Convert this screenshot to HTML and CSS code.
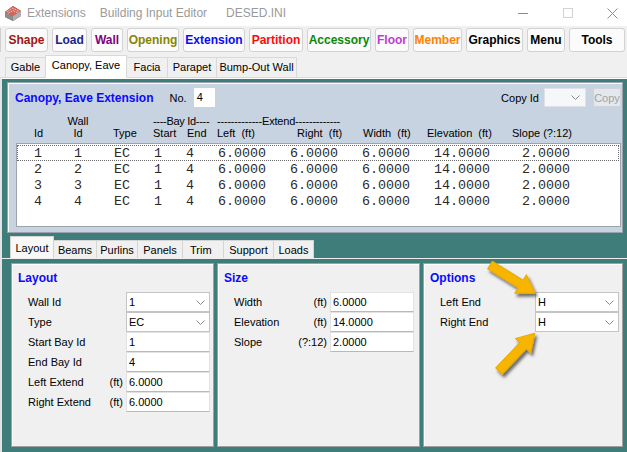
FILE: index.html
```html
<!DOCTYPE html>
<html>
<head>
<meta charset="utf-8">
<title>Extensions</title>
<link rel="stylesheet" href="styles.css">
</head>
<body>
<div class="window">
  <div class="titlebar">
    <svg class="appicon" viewBox="0 0 18 18">
      <polygon points="1,8 9,2 17,7 17,12 9,17 1,13" fill="#a8403a"/>
      <polygon points="1,8 9,2 17,7 9,12" fill="#d0685c"/>
      <polyline points="3,8 9,4 15,7.5" fill="none" stroke="#f3d6d0" stroke-width="0.8" stroke-dasharray="2 1"/>
      <polyline points="4,9.5 9,6.5 14,9" fill="none" stroke="#f3d6d0" stroke-width="0.8" stroke-dasharray="2 1"/>
      <polygon points="1,8 9,12 9,17 1,13" fill="#8d8d8d"/>
      <polygon points="9,12 17,7 17,12 9,17" fill="#b0b0b0"/>
    </svg>
    <span class="t1">Extensions</span>
    <span class="t2">Building Input Editor</span>
    <span class="t3">DESED.INI</span>
    <div class="caption">
      <span class="cb"><svg width="10" height="10" viewBox="0 0 10 10"><line x1="0" y1="5.5" x2="10" y2="5.5" stroke="#8c8c8c"/></svg></span>
      <span class="cb"><svg width="10" height="10" viewBox="0 0 10 10"><rect x="0.5" y="0.5" width="9" height="9" fill="none" stroke="#d2d2d2"/></svg></span>
      <span class="cb"><svg width="11" height="11" viewBox="0 0 11 11"><path d="M0.5 0.5 L10.5 10.5 M10.5 0.5 L0.5 10.5" stroke="#8c8c8c" fill="none"/></svg></span>
    </div>
  </div>

  <div class="toolbar">
    <span class="tb-edge"></span>
    <span class="tb c-shape">Shape</span>
    <span class="tb c-load">Load</span>
    <span class="tb c-wall">Wall</span>
    <span class="tb c-opening">Opening</span>
    <span class="tb c-extension">Extension</span>
    <span class="tb c-partition">Partition</span>
    <span class="tb c-accessory">Accessory</span>
    <span class="tb c-floor">Floor</span>
    <span class="tb c-member">Member</span>
    <span class="tb c-graphics">Graphics</span>
    <span class="tb c-menu">Menu</span>
    <span class="tb c-tools">Tools</span>
  </div>

  <div class="tabs1">
    <span class="tab w-gable">Gable</span>
    <span class="tab sel w-canopy">Canopy, Eave</span>
    <span class="tab w-facia">Facia</span>
    <span class="tab w-parapet">Parapet</span>
    <span class="tab w-bump">Bump-Out Wall</span>
  </div>

  <div class="body">
    <div class="panel">
      <div class="prow">
        <span class="ptitle">Canopy, Eave Extension</span>
        <span class="no">No.</span>
        <span class="numbox">4</span>
        <span class="copyid">Copy Id</span>
        <span class="smallcombo"><svg width="9" height="5" viewBox="0 0 9 5"><polyline points="0.5,0.5 4.5,4.5 8.5,0.5" fill="none" stroke="#8a8a8a"/></svg></span>
        <span class="copybtn">Copy</span>
      </div>
      <div class="hdr">
        <span class="h1 c2 ctr">Wall</span>
        <span class="h1 c4s">----Bay Id----</span>
        <span class="h1 c6s">-------------Extend-------------</span>
        <span class="h2 c1 pid">Id</span>
        <span class="h2 c2 ctr">Id</span>
        <span class="h2 c3 ptype">Type</span>
        <span class="h2 c4">Start</span>
        <span class="h2 c5">End</span>
        <span class="h2 c6">Left  (ft)</span>
        <span class="h2 c7">Right  (ft)</span>
        <span class="h2 c8">Width  (ft)</span>
        <span class="h2 c9">Elevation  (ft)</span>
        <span class="h2 c10">Slope (?:12)</span>
      </div>
      <div class="list">
        <div class="lrow focus">  1    1    EC   1   4   6.0000   6.0000   6.0000   14.0000    2.0000</div>
        <div class="lrow">  2    2    EC   1   4   6.0000   6.0000   6.0000   14.0000    2.0000</div>
        <div class="lrow">  3    3    EC   1   4   6.0000   6.0000   6.0000   14.0000    2.0000</div>
        <div class="lrow">  4    4    EC   1   4   6.0000   6.0000   6.0000   14.0000    2.0000</div>
      </div>
    </div>

    <div class="tabs2">
      <span class="tab2 sel w-layout">Layout</span>
      <span class="tab2 w-beams">Beams</span>
      <span class="tab2 w-purlins">Purlins</span>
      <span class="tab2 w-panels">Panels</span>
      <span class="tab2 w-trim">Trim</span>
      <span class="tab2 w-support">Support</span>
      <span class="tab2 w-loads">Loads</span>
    </div>

    <div class="page">
      <section class="grp">
        <div class="gtitle">Layout</div>
        <div class="frow">
          <span class="flabel">Wall Id</span>
          <span class="field combo"><span>1</span><svg width="9" height="5" viewBox="0 0 9 5"><polyline points="0.5,0.5 4.5,4.5 8.5,0.5" fill="none" stroke="#8a8a8a"/></svg></span>
        </div>
        <div class="frow">
          <span class="flabel">Type</span>
          <span class="field combo"><span>EC</span><svg width="9" height="5" viewBox="0 0 9 5"><polyline points="0.5,0.5 4.5,4.5 8.5,0.5" fill="none" stroke="#8a8a8a"/></svg></span>
        </div>
        <div class="frow">
          <span class="flabel">Start Bay Id</span>
          <span class="field">1</span>
        </div>
        <div class="frow">
          <span class="flabel">End Bay Id</span>
          <span class="field">4</span>
        </div>
        <div class="frow">
          <span class="flabel">Left Extend</span>
          <span class="unit">(ft)</span>
          <span class="field">6.0000</span>
        </div>
        <div class="frow">
          <span class="flabel">Right Extend</span>
          <span class="unit">(ft)</span>
          <span class="field">6.0000</span>
        </div>
      </section>

      <section class="grp grp-size">
        <div class="gtitle">Size</div>
        <div class="frow">
          <span class="flabel">Width</span>
          <span class="unit">(ft)</span>
          <span class="field">6.0000</span>
        </div>
        <div class="frow">
          <span class="flabel">Elevation</span>
          <span class="unit">(ft)</span>
          <span class="field">14.0000</span>
        </div>
        <div class="frow">
          <span class="flabel">Slope</span>
          <span class="unit">(?:12)</span>
          <span class="field">2.0000</span>
        </div>
      </section>

      <section class="grp">
        <div class="gtitle">Options</div>
        <div class="frow">
          <span class="flabel">Left End</span>
          <span class="field combo"><span>H</span><svg width="9" height="5" viewBox="0 0 9 5"><polyline points="0.5,0.5 4.5,4.5 8.5,0.5" fill="none" stroke="#8a8a8a"/></svg></span>
        </div>
        <div class="frow">
          <span class="flabel">Right End</span>
          <span class="field combo"><span>H</span><svg width="9" height="5" viewBox="0 0 9 5"><polyline points="0.5,0.5 4.5,4.5 8.5,0.5" fill="none" stroke="#8a8a8a"/></svg></span>
        </div>
      </section>
    </div>
  </div>

  <svg class="arrows" width="627" height="452" viewBox="0 0 627 452">
    <defs>
      <filter id="sh" x="-30%" y="-30%" width="160%" height="160%">
        <feDropShadow dx="2" dy="3" stdDeviation="1.6" flood-color="#000" flood-opacity="0.55"/>
      </filter>
    </defs>
    <g filter="url(#sh)" fill="#f7b500" stroke="#eaa800" stroke-width="1" stroke-linejoin="round">
      <polygon transform="translate(490,265) rotate(31.9)" points="0,-4.5 36,-4.5 36,-11 53,0 36,11 36,4.5 0,4.5"/>
      <polygon transform="translate(499,371) rotate(-46.5)" points="0,-4.5 35,-4.5 35,-10.5 52,0 35,10.5 35,4.5 0,4.5"/>
    </g>
  </svg>
</div>
</body>
</html>
```

FILE: styles.css
```css
* { box-sizing: border-box; margin: 0; padding: 0; }
html, body { width: 627px; height: 452px; overflow: hidden; background: #f0f0f0; }
body { font-family: "Liberation Sans", Arial, sans-serif; font-size: 11px; color: #000; }

.window { position: relative; width: 627px; height: 452px; display: flex; flex-direction: column; background: #f0f0f0; overflow: hidden; }

/* title bar */
.titlebar { height: 26px; flex: none; background: #fff; display: flex; align-items: center; padding-left: 4px; font-size: 12px; color: #9a9a9a; }
.appicon { width: 18px; height: 18px; flex: none; }
.t1 { margin-left: 5px; }
.t2 { margin-left: 14px; }
.t3 { margin-left: 19px; }
.caption { display: flex; margin-left: auto; margin-right: -8px; height: 26px; }
.cb { width: 45px; height: 26px; flex: none; display: flex; align-items: center; justify-content: center; }

/* toolbar */
.toolbar { height: 28px; flex: none; display: flex; align-items: center; gap: 4px; }
.tb-edge { width: 1px; height: 24px; border-right: 1px solid #cfcfcf; flex: none; }
.tb { height: 24px; flex: none; border: 1px solid #d2d2d2; border-radius: 3px; background: #fbfbfb; font-weight: bold; font-size: 12px; display: flex; align-items: center; justify-content: center; }
.c-shape { width: 43px; color: #a31515; }
.c-load { width: 35px; color: #1e1e8c; }
.c-wall { width: 32px; color: #800080; }
.c-opening { width: 52px; color: #868600; }
.c-extension { width: 62px; color: #0a0aff; }
.c-partition { width: 54px; color: #ff0a0a; }
.c-accessory { width: 64px; color: #0a880a; }
.c-floor { width: 34px; color: #c03cd0; }
.c-member { width: 49px; color: #ff8200; }
.c-graphics { width: 57px; color: #000; }
.c-menu { width: 38px; color: #000; }
.c-tools { width: 56px; color: #000; }

/* top tabs */
.tabs1 { height: 24px; flex: none; display: flex; align-items: flex-end; padding-left: 5px; border-bottom: 1px solid #d9d9d9; }
.tab { height: 20px; border: 1px solid #d9d9d9; border-bottom: none; margin-right: -1px; background: #f0f0f0; display: flex; align-items: center; justify-content: center; line-height: 13px; }
.tab.sel { height: 23px; margin-bottom: -1px; background: #fff; align-items: flex-start; padding-top: 3px; position: relative; z-index: 1; }
.w-gable { width: 41px; }
.w-canopy { width: 82px; }
.w-facia { width: 42px; }
.w-parapet { width: 50px; }
.w-bump { width: 81px; }

/* body */
.body { flex: 1; background: #3e7d7a; border-left: 2px solid #e4e4e4; border-top: 1px solid #fff; display: flex; flex-direction: column; }

.panel { margin: 3px 4px 0 5px; height: 151px; flex: none; background: #c7d3e0; border: 1px solid #9aa3ad; box-shadow: inset 1px 1px 0 #fff; padding: 5px 1px 5px 7px; display: flex; flex-direction: column; }
.prow { height: 19px; display: flex; align-items: center; }
.ptitle { font-weight: bold; font-size: 12px; color: #0a0aff; }
.no { margin-left: 16px; }
.numbox { margin-left: 7px; width: 21px; height: 19px; background: #fff; padding-left: 3px; line-height: 19px; }
.copyid { margin-left: auto; }
.smallcombo { margin-left: 5px; width: 42px; height: 19px; background: #f6f7f9; border: 1px solid #dde2e8; display: flex; align-items: center; justify-content: flex-end; padding-right: 5px; }
.copybtn { margin-left: 7px; width: 28px; height: 19px; background: #e4e8ec; border: 1px solid #cfd4da; border-radius: 2px; color: #a3a3a3; display: flex; align-items: center; justify-content: center; }

.hdr { margin-top: 8px; display: grid; grid-template-columns: 43px 40px 55px 34px 30px 80px 66px 64px 85px 1fr; grid-template-rows: 12px 12px; line-height: 12px; white-space: pre; }
.h1 { grid-row: 1; }
.h2 { grid-row: 2; }
.c1 { grid-column: 1; }
.c2 { grid-column: 2; }
.c3 { grid-column: 3; }
.c4 { grid-column: 4; }
.c5 { grid-column: 5; }
.c6 { grid-column: 6; }
.c7 { grid-column: 7; }
.c8 { grid-column: 8; }
.c9 { grid-column: 9; }
.c10 { grid-column: 10; }
.c4s { grid-column: 4 / span 2; letter-spacing: -0.3px; }
.c6s { grid-column: 6 / span 2; letter-spacing: -0.2px; }
.ctr { text-align: center; }
.pid { padding-left: 19px; }
.ptype { padding-left: 15px; }

.list { margin: 4px 0 0 1px; height: 84px; background: #fff; border: 1px solid #9ea4aa; padding-top: 1px; }
.lrow { height: 16px; border: 1px solid transparent; margin-right: 1px; font-family: "Liberation Mono", "Courier New", monospace; font-size: 13.333px; line-height: 15px; white-space: pre; color: #2a2a2a; }
.lrow.focus { border: 1px dotted #6a6a6a; }

/* lower tabs */
.tabs2 { margin-top: 3px; height: 22px; flex: none; display: flex; align-items: flex-end; padding-left: 8px; }
.tab2 { height: 18px; border: 1px solid #d4d4d4; border-bottom: none; margin-right: -1px; background: #f0f0f0; display: flex; align-items: center; justify-content: center; line-height: 13px; padding-top: 1px; }
.tab2.sel { height: 22px; background: #f8f8f8; align-items: flex-start; padding-top: 5px; position: relative; z-index: 1; }
.w-layout { width: 44px; }
.w-beams { width: 44px; }
.w-purlins { width: 42px; }
.w-panels { width: 46px; }
.w-trim { width: 42px; justify-content: flex-start !important; padding-left: 7px; }
.w-support { width: 51px; }
.w-loads { width: 41px; }

.page { flex: 1; border-top: 1px solid #eeeeee; padding: 4px 4px 0 9px; display: grid; grid-template-columns: 203px 203px 200px; column-gap: 3px; align-content: start; }
.grp { height: 184px; background: #f0f0f0; border: 1px solid #a0a0a0; box-shadow: inset 1px 1px 0 #fff; }
.gtitle { margin: 7px 0 7px 6px; font-weight: bold; font-size: 12px; line-height: 14px; color: #0a0aff; }
.frow { height: 20px; display: flex; align-items: center; padding-left: 16px; padding-right: 3px; }
.grp-size .frow { padding-right: 5px; }
.flabel { flex: 1; line-height: 20px; }
.unit { margin-right: 3px; }
.field { width: 84px; height: 20px; flex: none; background: #fff; border: 1px solid #e2e2e2; border-bottom-color: #b9b9b9; padding-left: 2px; line-height: 18px; }
.field.combo { border: 1px solid #c4c4c4; display: flex; align-items: center; justify-content: space-between; padding-right: 4px; }

.arrows { position: absolute; left: 0; top: 0; width: 627px; height: 452px; pointer-events: none; }
```
